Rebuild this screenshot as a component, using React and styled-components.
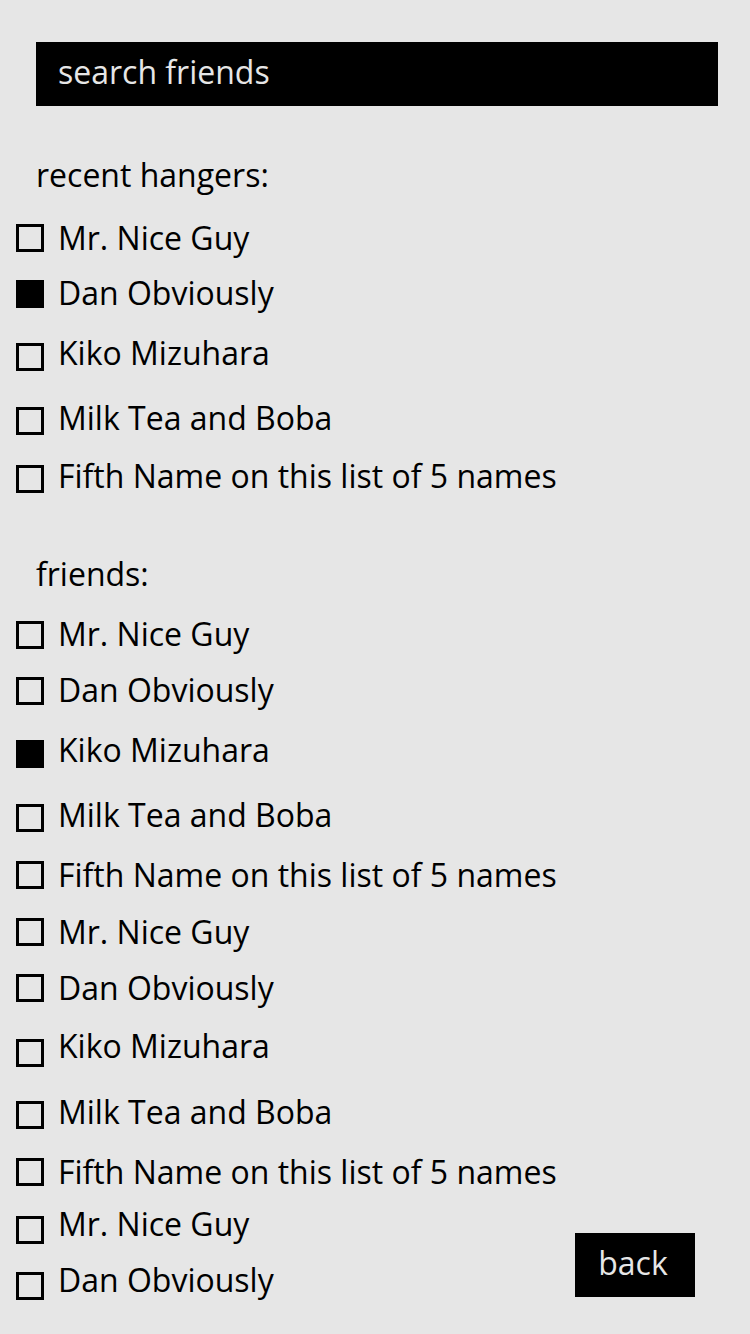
import React from "react";
import styled, { createGlobalStyle } from "styled-components";

const GlobalStyle = createGlobalStyle`
  html, body {
    margin: 0;
    padding: 0;
    background: #e6e6e6;
  }
  body {
    font-family: "Open Sans", "Noto Sans", sans-serif;
    color: #000;
  }
`;

const Page = styled.div`
  position: relative;
  width: 750px;
  min-height: 1334px;
  padding-top: 42px;
  box-sizing: border-box;
  overflow: hidden;
`;

const SearchBar = styled.div`
  display: flex;
  align-items: center;
  height: 64px;
  box-sizing: border-box;
  margin: 0 32px 0 36px;
  padding: 0 0 6px 22px;
  background: #000;
  color: #e6e6e6;
  font-size: 32px;
`;

const Heading = styled.div`
  margin: ${(p) => p.$top}px 0 0 36px;
  font-size: 32px;
  line-height: 40px;
`;

const List = styled.div`
  display: flex;
  flex-direction: column;
`;

const Row = styled.label`
  display: flex;
  align-items: center;
  height: 40px;
  margin-top: ${(p) => p.$top}px;
  padding-left: 16px;
  gap: 14px;
  font-size: 32px;
  line-height: 40px;
  white-space: nowrap;
`;

const Box = styled.span`
  flex: none;
  width: 28px;
  height: 28px;
  box-sizing: border-box;
  border: 3px solid #000;
  background: ${(p) => (p.$checked ? "#000" : "transparent")};
  margin-top: ${(p) => p.$shift * 2}px;
`;

const BackButton = styled.button`
  position: absolute;
  right: 55px;
  top: 1233px;
  width: 120px;
  height: 64px;
  border: 0;
  padding: 0 4px 6px 0;
  background: #000;
  color: #e6e6e6;
  font-family: "Open Sans", "Noto Sans", sans-serif;
  font-size: 32px;
`;

const recent = [
  { name: "Mr. Nice Guy", c: 239, s: 0 },
  { name: "Dan Obviously", c: 294, s: 0.5, checked: true },
  { name: "Kiko Mizuhara", c: 354, s: 3.5 },
  { name: "Milk Tea and Boba", c: 419, s: 2.5 },
  { name: "Fifth Name on this list of 5 names", c: 477, s: 2.5 },
];

const friends = [
  { name: "Mr. Nice Guy", c: 634, s: 0.5 },
  { name: "Dan Obviously", c: 690, s: 0.5 },
  { name: "Kiko Mizuhara", c: 750, s: 3.5, checked: true },
  { name: "Milk Tea and Boba", c: 815, s: 2.5 },
  { name: "Fifth Name on this list of 5 names", c: 875, s: 0 },
  { name: "Mr. Nice Guy", c: 932, s: -0.5 },
  { name: "Dan Obviously", c: 988, s: -0.5 },
  { name: "Kiko Mizuhara", c: 1046, s: 7 },
  { name: "Milk Tea and Boba", c: 1112, s: 2.5 },
  { name: "Fifth Name on this list of 5 names", c: 1172, s: 0 },
  { name: "Mr. Nice Guy", c: 1224, s: 5.5 },
  { name: "Dan Obviously", c: 1280, s: 6 },
];

// rows are 40px tall with the cap centre 21px down, so the gap is the centre distance minus 40
const FriendList = ({ items, start }) => (
  <List>
    {items.map((f, i) => {
      const top = i === 0 ? f.c - 21 - start : f.c - items[i - 1].c - 40;
      return (
        <Row key={i} $top={top}>
          <Box $checked={f.checked} $shift={f.s} />
          {f.name}
        </Row>
      );
    })}
  </List>
);

export default function App() {
  return (
    <>
      <GlobalStyle />
      <Page>
        <SearchBar>search friends</SearchBar>
        <Heading $top={49}>recent hangers:</Heading>
        <FriendList items={recent} start={195} />
        <Heading $top={58}>friends:</Heading>
        <FriendList items={friends} start={593} />
        <BackButton>back</BackButton>
      </Page>
    </>
  );
}
